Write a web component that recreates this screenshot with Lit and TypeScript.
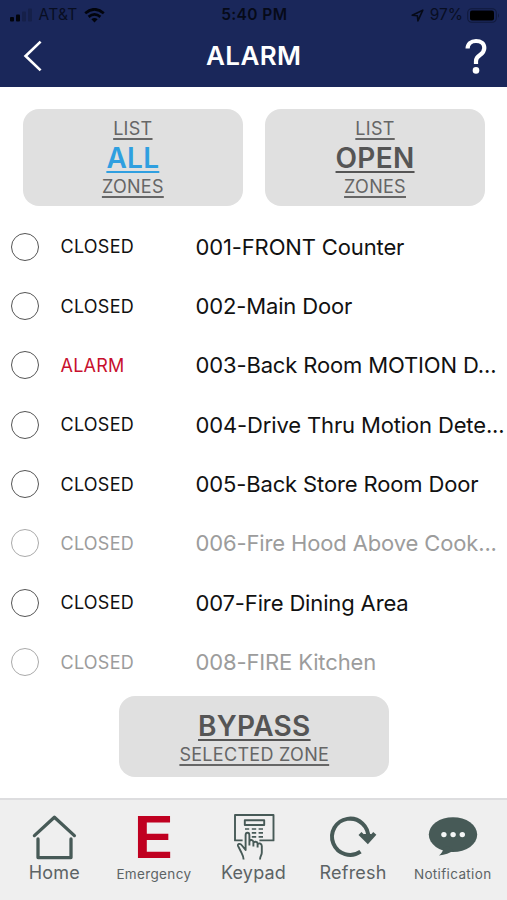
import { LitElement, html, css, svg } from "lit";
import { customElement, property } from "lit/decorators.js";
import { classMap } from "lit/directives/class-map.js";

interface Zone {
  name: string;
  status: "CLOSED" | "ALARM";
  disabled?: boolean;
}

const ZONES: Zone[] = [
  { name: "001-FRONT Counter", status: "CLOSED" },
  { name: "002-Main Door", status: "CLOSED" },
  { name: "003-Back Room MOTION D...", status: "ALARM" },
  { name: "004-Drive Thru Motion Dete...", status: "CLOSED" },
  { name: "005-Back Store Room Door", status: "CLOSED" },
  { name: "006-Fire Hood Above Cook...", status: "CLOSED", disabled: true },
  { name: "007-Fire Dining Area", status: "CLOSED" },
  { name: "008-FIRE Kitchen", status: "CLOSED", disabled: true },
];

@customElement("status-bar")
class StatusBar extends LitElement {
  static styles = css`
    :host {
      display: grid;
      grid-template-columns: 1fr auto 1fr;
      align-items: center;
      height: 30px;
      padding: 0 7px 0 8.5px;
      color: #060a18;
      font-size: 15.5px;
      line-height: 30px;
    }
    .side { display: flex; align-items: center; }
    .right { justify-content: flex-end; }
    .carrier { margin: 0 6.5px 0 6px; letter-spacing: 0.3px; opacity: 0.85; }
    .time { font-weight: 600; letter-spacing: 0.4px; }
    .percent { margin: 0 4px 0 6px; opacity: 0.85; letter-spacing: 0; }
    svg { display: block; }
  `;
  render() {
    return html`
      <div class="side">
        <svg width="24" height="14" viewBox="0 0 24 14">
          <rect x="1" y="9" width="4" height="4.5" rx="1" fill="#02040c" />
          <rect x="7" y="6.5" width="4" height="7" rx="1" fill="#02040c" />
          <rect x="13" y="3.5" width="4" height="10" rx="1" fill="#152049" />
          <rect x="19" y="0.5" width="4" height="13" rx="1" fill="#152049" />
        </svg>
        <span class="carrier">AT&amp;T</span>
        <svg width="21" height="15" viewBox="0 0 21 15" fill="none" stroke="#02040c" stroke-width="2.7">
          <path d="M1.2 5.2Q10.5 -2.6 19.8 5.2" />
          <path d="M4.6 8.9Q10.5 3.9 16.4 8.9" />
          <path d="M7.4 11.2Q10.5 8.6 13.6 11.2L10.5 14.6Z" fill="#02040c" stroke="none" />
        </svg>
      </div>
      <span class="time">5:40 PM</span>
      <div class="side right">
        <svg width="13" height="13" viewBox="0 0 13 13" fill="none" stroke="#060a18" stroke-width="1.6" stroke-linejoin="round">
          <path d="M1.2 6.3L11.8 1.2L6.9 11.8L6.4 6.7Z" />
        </svg>
        <span class="percent">97%</span>
        <svg width="33" height="15" viewBox="0 0 33 15">
          <rect x="0.7" y="0.7" width="28.6" height="13.6" rx="4" fill="none" stroke="#111a3c" stroke-width="1.1" />
          <rect x="3" y="2.6" width="24" height="10" rx="2" fill="#000" />
          <path d="M31 5.2Q33 7.5 31 9.8Z" fill="#111a3c" />
        </svg>
      </div>
    `;
  }
}

@customElement("nav-bar")
class NavBar extends LitElement {
  static styles = css`
    :host {
      display: grid;
      grid-template-columns: 1fr auto 1fr;
      align-items: center;
      height: 52px;
      padding: 0 20.5px 0 23px;
      color: #fff;
    }
    .title {
      margin-left: -2px;
      font-size: 26px;
      font-weight: 600;
      line-height: 34px;
      letter-spacing: 0.4px;
    }
    .help { justify-self: end; }
    svg { display: block; }
  `;
  render() {
    return html`
      <svg width="20" height="32" viewBox="0 0 20 32" fill="none" stroke="#fff" stroke-width="2.7">
        <path d="M17.6 1.6L2.6 16L17.6 30.4" />
      </svg>
      <span class="title">ALARM</span>
      <svg class="help" width="22" height="36" viewBox="0 0 22 36" fill="none">
        <path d="M2.6 10.6C2.6 5.8 6 3 11 3C16 3 19.3 5.8 19.3 9.9C19.3 13.2 17.6 15.1 15 16.9C12 18.9 11 20.4 11 23V26" stroke="#fff" stroke-width="4.2" />
        <circle cx="11" cy="32.4" r="3.3" fill="#fff" />
      </svg>
    `;
  }
}

@customElement("action-card")
class ActionCard extends LitElement {
  @property() over = "";
  @property() main = "";
  @property() under = "";
  @property({ type: Boolean }) active = false;
  static styles = css`
    :host {
      display: flex;
      flex-direction: column;
      align-items: center;
      justify-content: center;
      background: #e0e0e0;
      border-radius: 16px;
      color: #666;
    }
    span { display: block; text-decoration: underline; text-decoration-skip-ink: none; }
    .small {
      font-size: 18px;
      line-height: 24px;
      letter-spacing: 0.3px;
      text-decoration-thickness: 1.5px;
      text-underline-offset: 3px;
    }
    .main {
      font-size: 28px;
      line-height: 34px;
      font-weight: 600;
      letter-spacing: 0.3px;
      color: #555;
      text-decoration-thickness: 2.3px;
      text-underline-offset: 3.4px;
    }
    .active { color: #2f9fe0; }
  `;
  render() {
    return html`
      ${this.over ? html`<span class="small">${this.over}</span>` : ""}
      <span class=${classMap({ main: true, active: this.active })}>${this.main}</span>
      <span class="small">${this.under}</span>
    `;
  }
}

@customElement("zone-row")
class ZoneRow extends LitElement {
  @property({ attribute: false }) zone!: Zone;
  static styles = css`
    .row {
      display: grid;
      grid-template-columns: 49.5px 135px 1fr;
      align-items: center;
      height: 59.35px;
      padding-left: 11px;
      color: #111;
      white-space: nowrap;
    }
    .radio {
      box-sizing: border-box;
      width: 28px;
      height: 28px;
      border: 1.5px solid #555;
      border-radius: 50%;
    }
    .status { font-size: 18px; letter-spacing: 0.25px; }
    .name { font-size: 22px; letter-spacing: -0.14px; }
    .alarm { color: #c8102e; }
    .disabled { color: #9c9c9c; }
    .disabled .radio { border-color: #aaa; }
  `;
  render() {
    const z = this.zone;
    return html`
      <div class=${classMap({ row: true, disabled: !!z.disabled })}>
        <span class="radio"></span>
        <span class=${classMap({ status: true, alarm: z.status === "ALARM" })}>${z.status}</span>
        <span class="name">${z.name}</span>
      </div>
    `;
  }
}

const homeIcon = svg`
  <g fill="none" stroke="#475a57" stroke-width="3.3" stroke-linecap="round" stroke-linejoin="round">
    <path d="M5.4 25.6L25.4 7.2L45.4 25.6" />
    <path d="M9 29V47.6H42V29" />
  </g>`;

const keypadIcon = svg`
  <g fill="none" stroke="#475a57" stroke-width="1.9" stroke-linejoin="round">
    <path d="M13.6 30.4H6V5H44.5V30.4H30.4" />
    <rect x="15.8" y="10.2" width="19.4" height="4.8" />
    <path d="M16 19h4.2M22.8 19h4.4M29.6 19h4.4M22.8 22.9h4.4M29.6 22.9h4.4M22.8 26.8h4.4M29.6 26.8h4.4" stroke-width="1.7" />
    <path d="M14.6 49.4C14.6 46.2 13 44 11.6 41L9 35.8C8.4 33.8 11.4 33.2 12.6 35L16.6 40V25.2C16.6 22 20.4 22 20.4 25.2V35.6M20.4 31.8C20.8 29.2 24.2 29.6 24.4 32.2V36.4M24.4 33C25 31 28.4 31.4 28.6 33.6V37.4M28.6 34.6C29.4 32.6 32.8 33.2 32.8 36V42.6C32.8 45.4 31 46 31 49.4" />
  </g>`;

const refreshIcon = svg`
  <g fill="none" stroke="#475a57">
    <path d="M32.5 41.6A18.1 18.1 0 1 1 40.2 28" stroke-width="4" />
    <path d="M32 23.4L39.8 31.2L46.8 23.4" stroke-width="4.2" />
    <path d="M35 24L39.8 31.2L44 24Z" fill="#475a57" stroke="none" />
  </g>`;

const chatIcon = svg`
  <ellipse cx="25" cy="24.6" rx="24.2" ry="17.4" fill="#475a57" />
  <path d="M15.6 38C15 41.2 13.4 43.6 11 45.6C17 44.8 22 43.2 25.4 40.6L20 36Z" fill="#475a57" />
  <g fill="#f4f6f6"><circle cx="15.9" cy="24.6" r="2.7" /><circle cx="25.1" cy="24.6" r="2.7" /><circle cx="34.3" cy="24.6" r="2.7" /></g>`;

@customElement("tab-bar")
class TabBar extends LitElement {
  static styles = css`
    :host {
      display: grid;
      grid-template-columns: repeat(5, 99.6px);
      justify-content: center;
      box-sizing: border-box;
      height: 102px;
      padding-top: 9.5px;
      border-top: 2px solid #dddddf;
      background: #efefef;
      color: #5c6365;
    }
    .tab { display: flex; flex-direction: column; align-items: center; }
    .icon { display: flex; justify-content: center; width: 52px; height: 51.5px; }
    svg { display: block; overflow: visible; }
    .letter {
      font-size: 58px;
      font-weight: 600;
      line-height: 54px;
      height: 50px;
      color: #c00020;
      transform: scaleX(1.17);
    }
    .label { font-size: 18px; line-height: 24px; letter-spacing: 0.2px; }
    .label.compact { font-size: 13.5px; letter-spacing: 0.35px; line-height: 27px; }
  `;
  render() {
    const tab = (label: string, icon: unknown, compact = false) => html`
      <div class="tab">
        <div class="icon">${icon}</div>
        <span class=${classMap({ label: true, compact })}>${label}</span>
      </div>`;
    const pic = (shape: unknown) =>
      html`<svg width="50" height="50" viewBox="0 0 50 50">${shape}</svg>`;
    return html`
      ${tab("Home", pic(homeIcon))}
      ${tab("Emergency", html`<span class="letter">E</span>`, true)}
      ${tab("Keypad", pic(keypadIcon))}
      ${tab("Refresh", pic(refreshIcon))}
      ${tab("Notification", pic(chatIcon), true)}
    `;
  }
}

@customElement("app-root")
class AppRoot extends LitElement {
  static styles = css`
    :host {
      display: flex;
      flex-direction: column;
      width: 507px;
      height: 900px;
      overflow: hidden;
      background: #fff;
      font-family: Inter, "Liberation Sans", sans-serif;
    }
    .header { height: 87px; background: #1a275a; }
    .filters {
      display: grid;
      grid-template-columns: 220.7px 220.7px;
      gap: 21.5px;
      padding: 22px 0 0 22.5px;
      height: 97px;
    }
    .zones { flex: 1; padding-top: 11px; }
    .bypass {
      box-sizing: border-box;
      width: 270px;
      height: 81px;
      margin: 0 0 21.5px 119.3px;
      padding-top: 3.5px;
    }
  `;
  render() {
    return html`
      <div class="header">
        <status-bar></status-bar>
        <nav-bar></nav-bar>
      </div>
      <div class="filters">
        <action-card over="LIST" main="ALL" under="ZONES" active></action-card>
        <action-card over="LIST" main="OPEN" under="ZONES"></action-card>
      </div>
      <div class="zones">${ZONES.map((z) => html`<zone-row .zone=${z}></zone-row>`)}</div>
      <action-card class="bypass" main="BYPASS" under="SELECTED ZONE"></action-card>
      <tab-bar></tab-bar>
    `;
  }
}
